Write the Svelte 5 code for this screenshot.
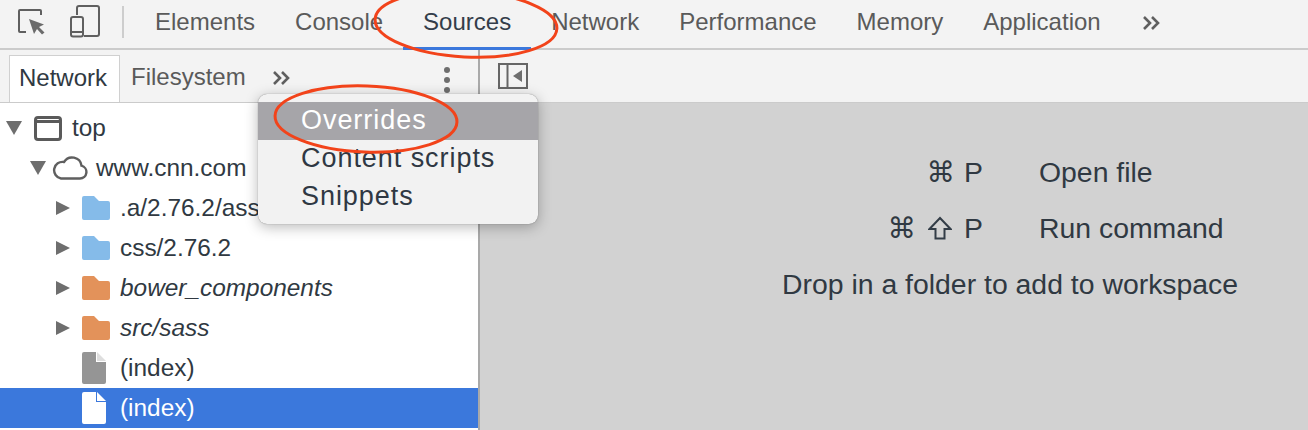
<script>
	const tabs = ['Elements', 'Console', 'Sources', 'Network', 'Performance', 'Memory', 'Application'];
	const activeTab = 'Sources';

	const rows = [
		{ label: 'top', pad: 6, arrow: 'down', icon: 'frame' },
		{ label: 'www.cnn.com', pad: 30, arrow: 'down', icon: 'cloud' },
		{ label: '.a/2.76.2/assets', pad: 56, arrow: 'right', icon: 'folder' },
		{ label: 'css/2.76.2', pad: 56, arrow: 'right', icon: 'folder' },
		{ label: 'bower_components', pad: 56, arrow: 'right', icon: 'folder-local' },
		{ label: 'src/sass', pad: 56, arrow: 'right', icon: 'folder-local' },
		{ label: '(index)', pad: 56, icon: 'file' },
		{ label: '(index)', pad: 56, icon: 'file', selected: true }
	];

	const menuItems = ['Overrides', 'Content scripts', 'Snippets'];
	const folderPath = 'M2 0H12L17 5H26a2 2 0 0 1 2 2V22a2 2 0 0 1-2 2H2a2 2 0 0 1-2-2V2a2 2 0 0 1 2-2z';
</script>

{#snippet chevrons()}
	<svg class="chevrons" width="19" height="16" viewBox="0 0 19 16">
		<path d="M2 2l6 6-6 6M10 2l6 6-6 6" fill="none" stroke="#5f5f5f" stroke-width="2.6" />
	</svg>
{/snippet}

<div class="devtools">
	<header class="toolbar">
		<div class="tool-icons">
			<svg class="inspect" width="28" height="26" viewBox="0 0 28 26">
				<path d="M8 23H2a1 1 0 0 1-1-1V2a1 1 0 0 1 1-1H22a1 1 0 0 1 1 1V6" fill="none" stroke="#5f5f5f" stroke-width="2" />
				<path d="M11 10L26 15.500L21 18L26.500 23.500L24 25.500L19 20L16 25z" fill="#6b6b6b" />
			</svg>
			<svg class="device" width="31" height="33" viewBox="0 0 31 33">
				<path d="M7 10V3a2 2 0 0 1 2-2H27a2 2 0 0 1 2 2V29a2 2 0 0 1-2 2H14" fill="none" stroke="#5f5f5f" stroke-width="2" />
				<rect x="1" y="12" width="12" height="19.500" rx="2" fill="none" stroke="#5f5f5f" stroke-width="2" />
				<path d="M1 27H13" stroke="#5f5f5f" stroke-width="2" />
			</svg>
		</div>
		<div class="separator"></div>
		<nav class="tabs">
			{#each tabs as tab}
				<div class="tab" class:active={tab === activeTab}>{tab}</div>
			{/each}
			<div class="more">{@render chevrons()}</div>
		</nav>
	</header>

	<div class="panes">
		<aside class="sidebar">
			<div class="subbar">
				<div class="subtab current">Network</div>
				<div class="subtab">Filesystem</div>
				<div class="sub-more">{@render chevrons()}</div>
				<div class="kebab"><i></i><i></i><i></i></div>
			</div>

			<ul class="tree">
				{#each rows as row}
					<li class="row" class:selected={row.selected} style="padding-left:{row.pad}px">
						<span class="arrow">
							{#if row.arrow === 'down'}
								<svg width="16" height="14" viewBox="0 0 16 14"><path d="M0 0H16L8 14z" fill="#6e6e6e" /></svg>
							{:else if row.arrow === 'right'}
								<svg width="14" height="14" viewBox="0 0 14 14"><path d="M0 0L14 7L0 14z" fill="#6e6e6e" /></svg>
							{/if}
						</span>
						{#if row.icon === 'frame'}
							<svg class="icon i-frame" width="28" height="25" viewBox="0 0 28 25">
								<rect x="1.500" y="1.500" width="25" height="22" rx="2.500" fill="none" stroke="#5a5a5a" stroke-width="3" />
								<path d="M2 5.500H26" stroke="#5a5a5a" stroke-width="3" />
							</svg>
						{:else if row.icon === 'cloud'}
							<svg class="icon i-cloud" width="36" height="24" viewBox="0 0 36 24">
								<path d="M9 22.500H28a6.500 6.500 0 0 0 1.500-12.800A9.500 9.500 0 0 0 12 6A8.300 8.300 0 0 0 9 22.500z" fill="none" stroke="#5f5f5f" stroke-width="2.400" />
							</svg>
						{:else if row.icon === 'folder'}
							<svg class="icon i-folder" width="28" height="24" viewBox="0 0 28 24"><path d={folderPath} fill="#85bbe9" /></svg>
						{:else if row.icon === 'folder-local'}
							<svg class="icon i-folder" width="28" height="24" viewBox="0 0 28 24"><path d={folderPath} fill="#e3925a" /></svg>
						{:else}
							<svg class="icon i-file" width="24" height="32" viewBox="0 0 24 32">
								<path d="M2 0H14V10H24V30a2 2 0 0 1-2 2H2a2 2 0 0 1-2-2V2a2 2 0 0 1 2-2z" fill={row.selected ? '#fff' : '#959595'} />
								<path d="M15 0L24 9H15z" fill={row.selected ? '#fff' : '#dedede'} />
							</svg>
						{/if}
						<span class="label" class:italic={row.icon === 'folder-local'}>{row.label}</span>
					</li>
				{/each}
			</ul>
		</aside>

		<main class="editor">
			<div class="subbar toggle-bar">
				<svg width="30" height="26" viewBox="0 0 30 26">
					<rect x="1" y="1" width="28" height="24" fill="none" stroke="#666" stroke-width="2" />
					<path d="M9.500 1V25" stroke="#666" stroke-width="2" />
					<path d="M24 7V19L15 13z" fill="#6e6e6e" />
				</svg>
			</div>
			<div class="placeholder">
				<div class="hints">
					<div class="hint">
						<span class="keys"><span>⌘</span><span>P</span></span>
						<span>Open file</span>
					</div>
					<div class="hint">
						<span class="keys">
							<span>⌘</span>
							<svg class="shift" width="24" height="24" viewBox="0 0 24 24">
								<path d="M1.500 13L12 2L22.500 13H16.500V22.500H7.500V13z" fill="none" stroke="#333d47" stroke-width="2" />
							</svg>
							<span>P</span>
						</span>
						<span>Run command</span>
					</div>
					<div class="drop">Drop in a folder to add to workspace</div>
				</div>
			</div>
		</main>
	</div>

	<div class="menu">
		{#each menuItems as item, i}
			<div class="menu-item" class:hovered={i === 0}>{item}</div>
		{/each}
	</div>

	<!-- hand-drawn red annotations on top of the screenshot -->
	<svg class="annotations" width="1308" height="430" viewBox="0 0 1308 430">
		<ellipse cx="466" cy="24" rx="91" ry="33" transform="rotate(3 466 24)" />
		<ellipse cx="366" cy="119" rx="91" ry="33" transform="rotate(2 366 119)" />
	</svg>
</div>

<style>
	:global(body) {
		margin: 0;
		background: #d2d2d2;
	}

	.devtools {
		position: relative;
		width: 1308px;
		height: 430px;
		overflow: hidden;
		font-family: 'Liberation Sans', 'DejaVu Sans', sans-serif;
		font-size: 24px;
		color: #303942;
	}

	.toolbar {
		display: flex;
		align-items: stretch;
		height: 48px;
		background: #f3f3f3;
		border-bottom: 2px solid #cbcbcb;
	}

	.tool-icons {
		display: flex;
		align-items: flex-start;
		width: 122px;
		flex: none;
	}
	.inspect { margin: 9px 0 0 18px; }
	.device { margin: 5px 0 0 24px; }

	.separator {
		width: 2px;
		height: 32px;
		margin-top: 6px;
		background: #cdcdcd;
	}

	.tabs {
		display: flex;
		padding-left: 11px;
	}
	.tab {
		padding: 0 20px;
		height: 48px;
		line-height: 44px;
		color: #5a5a5a;
		box-sizing: border-box;
	}
	.tab.active {
		color: #333d4a;
		border-bottom: 3px solid #3b78dc;
		height: 50px;
	}
	.more {
		display: flex;
		align-items: center;
		padding: 0 0 3px 21px;
	}

	.panes {
		display: flex;
		height: 380px;
	}

	.sidebar {
		width: 478px;
		flex: none;
		background: #fff;
		border-right: 2px solid #a9a9a9;
	}

	.subbar {
		display: flex;
		align-items: flex-end;
		height: 53px;
		background: #f3f3f3;
		border-bottom: 1px solid #cbcbcb;
		box-sizing: border-box;
	}
	.sidebar .subbar { padding-left: 9px; }

	.subtab {
		padding: 0 11px;
		height: 47px;
		line-height: 44px;
		color: #5a5a5a;
		box-sizing: border-box;
	}
	.subtab.current {
		background: #fff;
		color: #303942;
		border: 1px solid #d0d0d0;
		border-bottom: none;
		padding: 0 9px;
		width: 111px;
	}
	.sub-more {
		height: 49px;
		display: flex;
		align-items: center;
		padding-left: 15px;
	}
	.kebab {
		display: flex;
		flex-direction: column;
		gap: 4px;
		margin-left: 153px;
		padding-bottom: 9px;
	}
	.kebab i {
		width: 6px;
		height: 6px;
		border-radius: 50%;
		background: #6e6e6e;
	}

	.tree {
		list-style: none;
		margin: 0;
		padding: 5px 0 0;
		font-size: 24.400px;
	}
	.row {
		display: flex;
		align-items: center;
		height: 40px;
		white-space: nowrap;
	}
	.row.selected {
		background: #3b78dc;
		color: #fff;
	}
	.arrow {
		display: flex;
		width: 16px;
		flex: none;
	}
	.label { margin-left: 10px; }
	.label.italic { font-style: italic; }

	.i-frame { margin-left: 12px; }
	.i-cloud { margin-left: 6px; margin-right: -2px; }
	.i-folder { margin-left: 10px; }
	.i-file { margin-left: 10px; margin-right: 4px; }

	.editor {
		flex: 1;
		display: flex;
		flex-direction: column;
	}
	.toggle-bar {
		align-items: center;
		padding-left: 18px;
		flex: none;
	}

	.placeholder {
		flex: 1;
		background: #d2d2d2;
		padding: 41px 0 0 302px;
	}
	.hints {
		display: flex;
		flex-direction: column;
		width: 470px;
		font-size: 28.400px;
	}
	.hint {
		display: flex;
		gap: 56px;
		height: 56px;
		line-height: 56px;
	}
	.keys {
		display: flex;
		align-items: center;
		justify-content: flex-end;
		gap: 9px;
		width: 201px;
		flex: none;
	}
	.shift { margin: 0 3px; }
	.drop {
		height: 56px;
		line-height: 56px;
		white-space: nowrap;
	}

	.menu {
		position: absolute;
		left: 258px;
		top: 94px;
		width: 280px;
		height: 130px;
		box-sizing: border-box;
		padding-top: 8px;
		background: #f2f2f2;
		border-radius: 9px;
		box-shadow: 0 0 1px rgba(0, 0, 0, 0.5), 0 3px 14px rgba(0, 0, 0, 0.28);
		font-size: 27px;
		letter-spacing: 0.95px;
	}
	.menu-item {
		height: 38px;
		line-height: 37px;
		padding-left: 43px;
		color: #2f3843;
	}
	.menu-item.hovered {
		background: #a6a5a9;
		color: #fff;
	}

	.annotations {
		position: absolute;
		inset: 0;
		pointer-events: none;
	}
	.annotations ellipse {
		fill: none;
		stroke: #f2431a;
		stroke-width: 3;
	}
</style>
